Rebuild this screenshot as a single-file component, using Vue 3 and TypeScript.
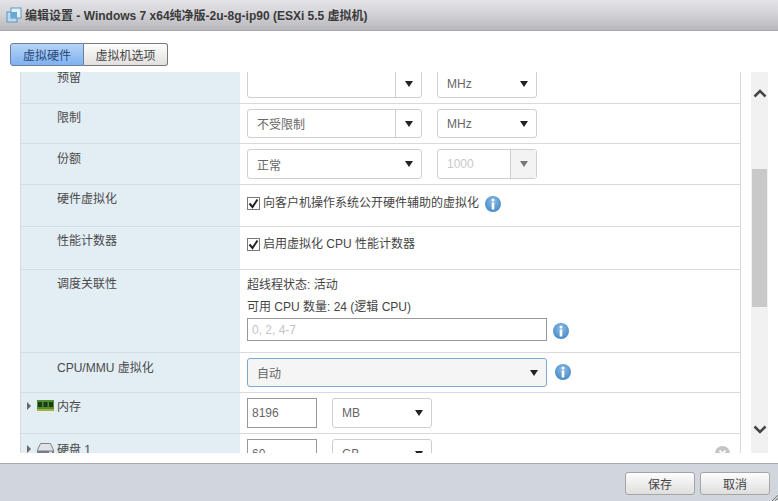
<script setup lang="ts">
const tabs = ['虚拟硬件', '虚拟机选项']
</script>

<template>
  <div class="dialog">
    <header class="titlebar">
      <svg class="vm-icon" width="16" height="16" viewBox="0 0 16 16">
        <rect x="1" y="5" width="10" height="10" fill="#bcd9ee" stroke="#5b9ac6" />
        <rect x="5" y="1" width="10" height="10" fill="#e4f0f8" stroke="#5b9ac6" />
        <rect x="5" y="5" width="6" height="6" fill="#6aa8d4" />
      </svg>
      <span class="title">编辑设置 - Windows 7 x64纯净版-2u-8g-ip90 (ESXi 5.5 虚拟机)</span>
    </header>

    <nav class="tabs">
      <button v-for="(t, i) in tabs" :key="t" class="tab" :class="{ active: i === 0 }">{{ t }}</button>
    </nav>

    <main class="body">
      <div class="viewport">
        <div class="list">
          <div class="row h40">
            <div class="label">预留</div>
            <div class="value">
              <div class="combo w175 short"><span class="txt"></span><i class="btn"><b class="tri"></b></i></div>
              <div class="select w100 short"><span class="txt">MHz</span><b class="tri"></b></div>
            </div>
          </div>
          <div class="row h40">
            <div class="label">限制</div>
            <div class="value">
              <div class="combo w175 short"><span class="txt">不受限制</span><i class="btn"><b class="tri"></b></i></div>
              <div class="select w100 short"><span class="txt">MHz</span><b class="tri"></b></div>
            </div>
          </div>
          <div class="row h41">
            <div class="label lower">份额</div>
            <div class="value">
              <div class="select w175"><span class="txt">正常</span><b class="tri"></b></div>
              <div class="combo w100 disabled"><span class="txt">1000</span><i class="btn"><b class="tri"></b></i></div>
            </div>
          </div>
          <div class="row h42">
            <div class="label">硬件虚拟化</div>
            <div class="value check-line">
              <span class="check"><svg width="11" height="11" viewBox="0 0 11 11"><path d="M1.500 5.500 4.500 9 9.500 1.500" fill="none" stroke="#222" stroke-width="2" /></svg></span>
              <span>向客户机操作系统公开硬件辅助的虚拟化</span>
              <svg class="info near" viewBox="0 0 16 16"><use href="#info-glyph" /></svg>
            </div>
          </div>
          <div class="row h43">
            <div class="label">性能计数器</div>
            <div class="value check-line">
              <span class="check"><svg width="11" height="11" viewBox="0 0 11 11"><path d="M1.500 5.500 4.500 9 9.500 1.500" fill="none" stroke="#222" stroke-width="2" /></svg></span>
              <span>启用虚拟化 CPU 性能计数器</span>
            </div>
          </div>
          <div class="row h83">
            <div class="label">调度关联性</div>
            <div class="value stack">
              <div class="line">超线程状态: 活动</div>
              <div class="line">可用 CPU 数量: 24 (逻辑 CPU)</div>
              <div class="affinity">
                <div class="input w300 hint">0, 2, 4-7</div>
                <svg class="info" viewBox="0 0 16 16"><use href="#info-glyph" /></svg>
              </div>
            </div>
          </div>
          <div class="row h40">
            <div class="label lower">CPU/MMU 虚拟化</div>
            <div class="value">
              <div class="select w300 short focused"><span class="txt">自动</span><b class="tri"></b></div>
              <svg class="info mmu" viewBox="0 0 16 16"><use href="#info-glyph" /></svg>
            </div>
          </div>
          <div class="row h41">
            <div class="label tree">
              <b class="caret"></b>
              <svg class="hw-icon" width="17" height="11" viewBox="0 0 17 11">
                <rect width="17" height="9" fill="#4f8f33" />
                <rect x="1" y="2" width="4" height="5" fill="#1f3a14" />
                <rect x="6.500" y="2" width="4" height="5" fill="#1f3a14" />
                <rect x="12" y="2" width="4" height="5" fill="#1f3a14" />
                <rect y="9" width="17" height="2" fill="#a8ad3c" />
              </svg>
              <span>内存</span>
            </div>
            <div class="value">
              <div class="input w70">8196</div>
              <div class="select w100"><span class="txt">MB</span><b class="tri"></b></div>
            </div>
          </div>
          <div class="row h41">
            <div class="label tree disk">
              <b class="caret"></b>
              <svg class="hw-icon" width="17" height="12" viewBox="0 0 17 12">
                <path d="M3.500.500h10L16.500 7v4.500H.5V7z" fill="#dfe3e6" stroke="#7d868c" />
                <rect x="1" y="7.500" width="15" height="4" fill="#767e84" />
                <rect x="12" y="8.500" width="3" height="1.500" fill="#d5d9dc" />
              </svg>
              <span>硬盘 1</span>
            </div>
            <div class="value">
              <div class="input w70">60</div>
              <div class="select w100"><span class="txt">GB</span><b class="tri"></b></div>
              <svg class="remove" width="15" height="15" viewBox="0 0 15 15">
                <circle cx="7.500" cy="7.500" r="7.500" fill="#c4c4c4" />
                <path d="M4.500 4.500l6 6M10.500 4.500l-6 6" stroke="#fff" stroke-width="2" />
              </svg>
            </div>
          </div>
        </div>
      </div>

      <div class="scrollbar">
        <svg class="chev" width="14" height="9" viewBox="0 0 14 9"><path d="M1.500 7.500 7 2l5.500 5.500" fill="none" stroke="#444" stroke-width="2.500" /></svg>
        <div class="track"><div class="thumb"></div></div>
        <svg class="chev" width="14" height="9" viewBox="0 0 14 9"><path d="M1.500 1.500 7 7l5.500-5.500" fill="none" stroke="#444" stroke-width="2.500" /></svg>
      </div>
    </main>

    <footer class="footer">
      <button class="action">保存</button>
      <button class="action">取消</button>
      <svg class="grip" width="6" height="6" viewBox="0 0 6 6"><path d="M6 0 0 6M6 3 3 6" stroke="#777" /></svg>
    </footer>

    <svg width="0" height="0" class="defs">
      <defs>
        <radialGradient id="info-fill" cx="50%" cy="35%" r="70%">
          <stop offset="0" stop-color="#8dbde6" />
          <stop offset="1" stop-color="#3f85c4" />
        </radialGradient>
        <g id="info-glyph">
          <circle cx="8" cy="8" r="8" fill="url(#info-fill)" />
          <circle cx="8" cy="4" r="1.500" fill="#fff" />
          <rect x="6.700" y="6.500" width="2.600" height="7" fill="#fff" />
        </g>
      </defs>
    </svg>
  </div>
</template>

<style scoped>
.dialog {
  display: flex;
  flex-direction: column;
  width: 778px;
  height: 501px;
  overflow: hidden;
  background: #fff;
  font-family: 'Liberation Sans', 'Noto Sans CJK SC', sans-serif;
  font-size: 12px;
  color: #444;
}

.titlebar {
  display: flex;
  align-items: center;
  gap: 3px;
  flex: none;
  box-sizing: border-box;
  height: 31px;
  padding: 0 0 1px 6px;
  background: linear-gradient(#e4e4e8, #d6d6da 40%, #b8b8bc);
  border-bottom: 1px solid #a8a8ac;
}

.title {
  font-weight: bold;
  color: #3a3a3a;
  white-space: nowrap;
}

.tabs {
  display: flex;
  flex: none;
  height: 23px;
  margin: 12px 0 6px 10px;
}

.tab {
  box-sizing: border-box;
  height: 23px;
  width: 84px;
  padding: 0;
  font: inherit;
  color: #444;
  border: 1px solid #777;
  border-left: none;
  border-radius: 0 3px 3px 0;
  background: linear-gradient(#fdfdfd, #e2e0de);
}

.tab.active {
  width: 74px;
  border-left: 1px solid #6b7f9c;
  border-color: #6b7f9c;
  border-radius: 3px 0 0 3px;
  background: linear-gradient(#b6d4f6, #7fb1f0);
  color: #2a4a78;
}

.body {
  display: flex;
  flex: none;
  height: 381px;
  margin: 0 10px 10px 20px;
}

.viewport {
  flex: none;
  box-sizing: border-box;
  width: 721px;
  overflow: hidden;
  border-right: 1px solid #d8d8d8;
}

.list {
  margin-top: -8px;
}

.row {
  display: grid;
  grid-template-columns: 220px 1fr;
  box-sizing: border-box;
  border-bottom: 1px solid #d6dbdf;
}

.h40 { height: 40px; }
.h41 { height: 41px; }
.h42 { height: 42px; }
.h43 { height: 43px; }
.h83 { height: 83px; }

.label {
  box-sizing: border-box;
  padding: 6px 0 0 36px;
  line-height: 16px;
  background: #e2edf4;
  border-left: 1px solid #d6dbdf;
  color: #4a4a4a;
}

.label.lower {
  padding-top: 7px;
}

.tree {
  display: flex;
  align-items: flex-start;
  padding-left: 6px;
}

.disk {
  padding-top: 8px;
}

.caret {
  flex: none;
  width: 0;
  height: 0;
  margin: 3px 6px 0 0;
  border-left: 4px solid #666;
  border-top: 4px solid transparent;
  border-bottom: 4px solid transparent;
}

.hw-icon {
  flex: none;
  margin: 1px 3px 0 0;
}

.value {
  display: flex;
  align-items: flex-start;
  gap: 15px;
  padding: 5px 0 0 7px;
  min-width: 0;
}

.select,
.combo,
.input {
  display: flex;
  align-items: center;
  flex: none;
  box-sizing: border-box;
  height: 30px;
  background: #fff;
  color: #666;
}

.short {
  height: 29px;
}

.select,
.combo {
  border: 1px solid #cecece;
  border-radius: 3px;
}

.select {
  justify-content: space-between;
  padding: 0 8px 0 9px;
}

.txt {
  flex: 1;
}

.combo .txt {
  padding-left: 9px;
}

.btn {
  display: flex;
  align-items: center;
  justify-content: center;
  flex: none;
  width: 25px;
  align-self: stretch;
  border-left: 1px solid #cecece;
}

.tri {
  flex: none;
  width: 0;
  height: 0;
  border-left: 4px solid transparent;
  border-right: 4px solid transparent;
  border-top: 6px solid #222;
}

.disabled .txt {
  color: #c8c8c8;
}

.disabled .btn {
  background: #f3f3f3;
}

.disabled .tri {
  border-top-color: #777;
}

.w70 { width: 70px; }
.w100 { width: 100px; }
.w175 { width: 175px; }
.w300 { width: 300px; }

.input {
  padding-left: 4px;
  border: 1px solid #999;
}

.input.hint {
  height: 23px;
  color: #c4c4c4;
}

.focused {
  background: #f5f5f5;
  border-color: #7fa9cf;
}

.check-line {
  align-items: center;
  align-self: start;
  gap: 3px;
  padding-top: 9px;
  line-height: 16px;
}

.check {
  display: flex;
  align-items: center;
  justify-content: center;
  box-sizing: border-box;
  width: 13px;
  height: 13px;
  background: #fff;
  border: 1px solid #777;
}

.info {
  flex: none;
  width: 16px;
  height: 16px;
  margin-left: 6px;
  margin-top: 2px;
}

.info.near {
  margin-left: 3px;
}

.info.mmu {
  margin: 6px 0 0 -7px;
}

.stack {
  display: block;
  padding-top: 6px;
}

.line {
  height: 22px;
  line-height: 18px;
}

.affinity {
  display: flex;
  align-items: center;
  margin-top: -2px;
}

.remove {
  flex: none;
  margin: 7px 10px 0 auto;
}

.scrollbar {
  display: flex;
  flex-direction: column;
  align-items: center;
  flex: none;
  box-sizing: border-box;
  width: 17px;
  margin-left: 10px;
  padding: 17px 0 19px;
  background: #f1f1f1;
}

.track {
  flex: 1;
  align-self: stretch;
  padding: 71px 1px 0;
}

.thumb {
  height: 138px;
  background: #c9c9c9;
}

.chev {
  flex: none;
}

.footer {
  display: flex;
  justify-content: flex-end;
  align-items: flex-start;
  gap: 5px;
  flex: 1;
  position: relative;
  box-sizing: border-box;
  padding: 8px 8px 0 0;
  background: #d0d6dc;
  border-top: 1px solid #a9a9a9;
}

.action {
  box-sizing: border-box;
  width: 70px;
  height: 23px;
  padding: 0;
  font: inherit;
  color: #444;
  border: 1px solid #a5a5a5;
  border-radius: 3px;
  background: linear-gradient(#fdfdfd, #dedede);
}

.grip {
  position: absolute;
  right: 0;
  bottom: 0;
}

.defs {
  position: absolute;
}
</style>
